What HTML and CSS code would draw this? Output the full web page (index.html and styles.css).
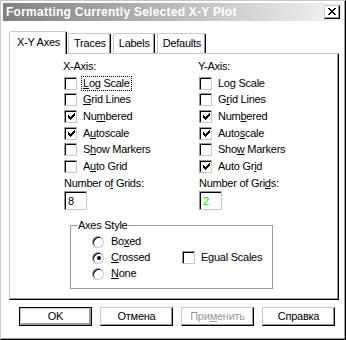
FILE: index.html
```html
<!DOCTYPE html>
<html>
<head>
<meta charset="utf-8">
<link rel="stylesheet" href="styles.css">
</head>
<body>
<div class="window">
  <div class="titlebar">
    <span class="title">Formatting Currently Selected X-Y Plot</span>
    <span class="close"><svg width="8" height="7" viewBox="0 0 8 7" shape-rendering="crispEdges"><path d="M0 0h2v1h1v1h2v-1h1v-1h2v1h-1v1h-1v1h-1v1h1v1h1v1h1v1h-2v-1h-1v-1h-2v1h-1v1h-2v-1h1v-1h1v-1h1v-1h-1v-1h-1v-1h-1z" fill="#000"/></svg></span>
  </div>
  <div class="tabs">
    <div class="tab active">X-Y Axes</div>
    <div class="tab">Traces</div>
    <div class="tab">Labels</div>
    <div class="tab">Defaults</div>
  </div>
  <div class="panel">
    <div class="axes">
      <div class="col">
        <div class="head">X-Axis:</div>
        <div class="chk"><span class="box"></span><span class="lbl focus"><u>L</u>og Scale</span></div>
        <div class="chk"><span class="box"></span><span class="lbl"><u>G</u>rid Lines</span></div>
        <div class="chk"><span class="box on"><svg width="7" height="7" viewBox="0 0 7 7" shape-rendering="crispEdges"><path d="M6 0h1v3h-1v1h-1v1h-1v1h-1v1h-1v-1h-1v-1h-1v-3h1v1h1v1h1v-1h1v-1h1z" fill="#000"/></svg></span><span class="lbl">Nu<u>m</u>bered</span></div>
        <div class="chk"><span class="box on"><svg width="7" height="7" viewBox="0 0 7 7" shape-rendering="crispEdges"><path d="M6 0h1v3h-1v1h-1v1h-1v1h-1v1h-1v-1h-1v-1h-1v-3h1v1h1v1h1v-1h1v-1h1z" fill="#000"/></svg></span><span class="lbl">A<u>u</u>toscale</span></div>
        <div class="chk"><span class="box"></span><span class="lbl">S<u>h</u>ow Markers</span></div>
        <div class="chk"><span class="box"></span><span class="lbl">A<u>u</u>to Grid</span></div>
        <div class="head grids">Number o<u>f</u> Grids:</div>
        <div class="field">8</div>
      </div>
      <div class="col">
        <div class="head">Y-Axis:</div>
        <div class="chk"><span class="box"></span><span class="lbl">Lo<u>g</u> Scale</span></div>
        <div class="chk"><span class="box"></span><span class="lbl">G<u>r</u>id Lines</span></div>
        <div class="chk"><span class="box on"><svg width="7" height="7" viewBox="0 0 7 7" shape-rendering="crispEdges"><path d="M6 0h1v3h-1v1h-1v1h-1v1h-1v1h-1v-1h-1v-1h-1v-3h1v1h1v1h1v-1h1v-1h1z" fill="#000"/></svg></span><span class="lbl">Num<u>b</u>ered</span></div>
        <div class="chk"><span class="box on"><svg width="7" height="7" viewBox="0 0 7 7" shape-rendering="crispEdges"><path d="M6 0h1v3h-1v1h-1v1h-1v1h-1v1h-1v-1h-1v-1h-1v-3h1v1h1v1h1v-1h1v-1h1z" fill="#000"/></svg></span><span class="lbl">Auto<u>s</u>cale</span></div>
        <div class="chk"><span class="box"></span><span class="lbl">Sho<u>w</u> Markers</span></div>
        <div class="chk"><span class="box on"><svg width="7" height="7" viewBox="0 0 7 7" shape-rendering="crispEdges"><path d="M6 0h1v3h-1v1h-1v1h-1v1h-1v1h-1v-1h-1v-1h-1v-3h1v1h1v1h1v-1h1v-1h1z" fill="#000"/></svg></span><span class="lbl">Auto Gr<u>i</u>d</span></div>
        <div class="head grids">Number of Gri<u>d</u>s:</div>
        <div class="field green">2</div>
      </div>
    </div>
    <fieldset class="group">
      <legend>Axes Style</legend>
      <div class="group-body">
        <div class="radios">
          <div class="rad"><span class="circle"></span><span class="lbl">Bo<u>x</u>ed</span></div>
          <div class="rad"><span class="circle on"></span><span class="lbl"><u>C</u>rossed</span></div>
          <div class="rad"><span class="circle"></span><span class="lbl"><u>N</u>one</span></div>
        </div>
        <div class="chk equal"><span class="box"></span><span class="lbl">Egual Scales</span></div>
      </div>
    </fieldset>
  </div>
  <div class="buttons">
    <div class="btn default">OK</div>
    <div class="btn">Отмена</div>
    <div class="btn disabled">При<u>м</u>енить</div>
    <div class="btn">Справка</div>
  </div>
</div>
</body>
</html>
```

FILE: styles.css
```css
html, body {
  margin: 0;
  padding: 0;
  background: #fff;
}

.window {
  width: 346px;
  height: 340px;
  box-sizing: border-box;
  border: 1px solid;
  border-color: #c8c8c8 #000 #000 #c8c8c8;
  box-shadow: inset -1px -1px #999;
  padding: 2px;
  background: #fff;
  font-family: "Liberation Sans", Arial, sans-serif;
  font-size: 11px;
  letter-spacing: -0.25px;
  color: #000;
}

.titlebar {
  height: 18px;
  display: flex;
  align-items: center;
  justify-content: space-between;
  padding: 0 3px 0 3px;
  background: linear-gradient(to right, #808080, #f4f4f4);
}

.title {
  color: #fff;
  font-weight: bold;
  font-size: 12px;
  letter-spacing: 0.25px;
}

.close {
  width: 16px;
  height: 14px;
  box-sizing: border-box;
  border: 1px solid;
  border-color: #c8c8c8 #000 #000 #c8c8c8;
  box-shadow: inset -1px -1px #999;
  background: #fff;
  display: flex;
  align-items: center;
  justify-content: center;
  padding-bottom: 1px;
}

.tabs {
  display: flex;
  align-items: flex-end;
  height: 22px;
  margin: 10px 0 0 6px;
  position: relative;
  z-index: 1;
}

.tab {
  height: 20px;
  box-sizing: border-box;
  border: 1px solid;
  border-bottom: none;
  border-color: #c8c8c8 #000 transparent #c8c8c8;
  box-shadow: inset -1px 0 #999;
  border-radius: 2px 2px 0 0;
  padding: 3px 4px 0 5px;
  background: #fff;
  margin-left: 2px;
}

.tab.active {
  height: 23px;
  margin: 0 -1px -1px 0;
  padding: 4px 6px 0 7px;
}

.panel {
  height: 247px;
  box-sizing: border-box;
  margin: 0 4px 0 6px;
  border: 1px solid;
  border-color: #c8c8c8 #000 #000 #c8c8c8;
  box-shadow: inset -1px -1px #999;
  padding: 6px 0 0 54px;
}

.axes {
  display: grid;
  grid-template-columns: 135px 120px;
}

.col {
  display: flex;
  flex-direction: column;
}

.head {
  height: 13px;
  line-height: 13px;
  margin-left: -1px;
  margin-bottom: 2px;
}

.head.grids {
  margin-top: 2px;
  margin-bottom: 1px;
  margin-left: 0;
}

.chk, .rad {
  display: flex;
  align-items: center;
  height: 16.6px;
}

.box {
  width: 13px;
  height: 13px;
  box-sizing: border-box;
  border: 1px solid;
  border-color: #999 #c8c8c8 #c8c8c8 #999;
  box-shadow: inset 1px 1px #000;
  display: flex;
  align-items: center;
  justify-content: center;
  padding: 1px 0 0 1px;
  flex: none;
}

.lbl {
  margin-left: 6px;
  line-height: 13px;
  white-space: nowrap;
}

.focus {
  outline: 1px dotted #000;
  outline-offset: 0;
  padding: 0 1px;
  margin-left: 5px;
}

u {
  text-decoration: underline;
  text-underline-offset: 1px;
}

.field {
  width: 23px;
  height: 19px;
  box-sizing: border-box;
  border: 1px solid;
  border-color: #999 #c8c8c8 #c8c8c8 #999;
  box-shadow: inset 1px 1px #000;
  padding: 2px 0 0 3px;
  line-height: 14px;
  margin-left: 0;
}

.field.green {
  color: #00e000;
}

.group {
  width: 203px;
  height: 70px;
  box-sizing: border-box;
  margin: 9px 0 0 6px;
  padding: 0;
  border: 1px solid #999;
  min-width: 0;
}

.group legend {
  padding: 0 1px;
  margin-left: 6px;
  line-height: 13px;
}

.group-body {
  display: flex;
  padding: 2px 0 0 21px;
}

.radios {
  width: 90px;
  display: flex;
  flex-direction: column;
}

.rad {
  height: 16px;
}

.circle {
  width: 12px;
  height: 12px;
  box-sizing: border-box;
  border-radius: 50%;
  border: 1px solid;
  border-color: #999 #c8c8c8 #c8c8c8 #999;
  box-shadow: inset 1px 1px #000;
  display: flex;
  align-items: center;
  justify-content: center;
  flex: none;
}

.circle.on::after {
  content: "";
  width: 4px;
  height: 4px;
  border-radius: 50%;
  background: #000;
  margin: 1px 0 0 1px;
}

.rad .lbl {
  margin-left: 7px;
}

.equal {
  margin-top: 16px;
  height: 16px;
}

.buttons {
  display: flex;
  gap: 8px;
  margin: 7px 0 0 16px;
}

.btn {
  width: 73px;
  height: 19px;
  box-sizing: border-box;
  border: 1px solid;
  border-color: #c8c8c8 #000 #000 #c8c8c8;
  box-shadow: inset -1px -1px #999;
  display: flex;
  align-items: center;
  justify-content: center;
  line-height: 13px;
}

.btn.default {
  border: 1px solid #000;
  box-shadow: inset 1px 1px #c8c8c8, inset -2px -2px #999;
}

.btn.disabled {
  color: #999;
}
```
